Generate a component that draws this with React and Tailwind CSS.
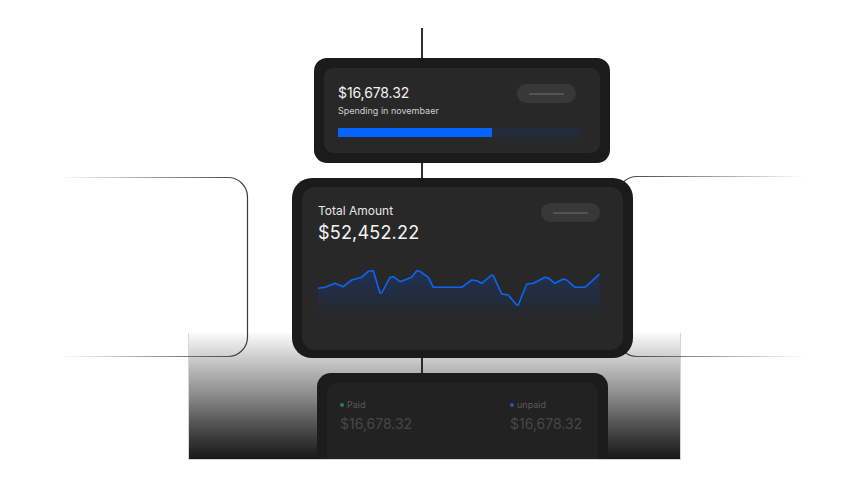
import React from "react";

const pts = [
  [0.3, 24.3], [7, 23.3], [17, 19.3], [25.3, 22.7], [33.7, 16], [43.7, 13.3], [50.3, 7.3], [55.3, 6.7],
  [62, 29], [63.7, 29], [72, 13.3], [75.3, 12.7], [82, 17.7], [93.7, 13.3], [98.7, 6.7], [102, 7.3],
  [110.3, 13.3], [115.3, 23.3], [143.7, 23.3], [153.7, 16], [158.7, 16.7], [163.7, 19.3], [173.7, 11],
  [175.3, 11.7], [183.7, 30], [190.3, 31], [198.7, 41], [200.3, 41], [208.7, 20], [215.3, 19.3],
  [227, 13.3], [230.3, 14], [237, 19.3], [245.3, 15], [248.7, 16], [257, 23.3], [267, 23.3], [281, 10.7],
];

function Chart() {
  const line = pts.map((p) => p.join(",")).join(" ");
  const area = `0,24.3 ${line} 282,60 0,60`;
  return (
    <svg width="282" height="60" viewBox="0 0 282 60" className="block">
      <defs>
        <linearGradient id="areaG" x1="0" y1="0" x2="0" y2="1">
          <stop offset="0" stopColor="#1b3566" stopOpacity="0.75" />
          <stop offset="0.6" stopColor="#1f2d48" stopOpacity="0.55" />
          <stop offset="1" stopColor="#282828" stopOpacity="0" />
        </linearGradient>
      </defs>
      <polygon points={area} fill="url(#areaG)" />
      <polyline points={line} fill="none" stroke="#0b67f2" strokeWidth="1.6" strokeLinejoin="round" strokeLinecap="round" />
    </svg>
  );
}

function Pill() {
  return (
    <div className="w-[59px] h-[19px] rounded-full bg-[#383838] flex items-center justify-center">
      <div className="w-[35px] h-[2px] rounded-full bg-[#545454]" />
    </div>
  );
}

function Connectors() {
  return (
    <svg width="864" height="486" viewBox="0 0 864 486" className="absolute inset-0">
      <defs>
        <linearGradient id="lg" x1="60" y1="0" x2="248" y2="0" gradientUnits="userSpaceOnUse">
          <stop offset="0" stopColor="#555" stopOpacity="0" />
          <stop offset="0.7" stopColor="#555" stopOpacity="0.8" />
          <stop offset="1" stopColor="#3a3a3a" stopOpacity="1" />
        </linearGradient>
        <linearGradient id="rg" x1="805" y1="0" x2="617" y2="0" gradientUnits="userSpaceOnUse">
          <stop offset="0" stopColor="#555" stopOpacity="0" />
          <stop offset="0.7" stopColor="#555" stopOpacity="0.8" />
          <stop offset="1" stopColor="#3a3a3a" stopOpacity="1" />
        </linearGradient>
      </defs>
      <path d="M60 177.5 H228 A19.5 19.5 0 0 1 247.5 197 V337 A19.5 19.5 0 0 1 228 356.5 H60" fill="none" stroke="url(#lg)" strokeWidth="1.2" />
      <path d="M805 176.5 H637 A19.5 19.5 0 0 0 617.5 196 V337 A19.5 19.5 0 0 0 637 356.5 H805" fill="none" stroke="url(#rg)" strokeWidth="1.2" />
    </svg>
  );
}

export default function App() {
  return (
    <div className="relative w-[864px] h-[486px] overflow-hidden bg-white font-['Inter',sans-serif]">
      <div className="absolute left-[188px] top-[333px] w-[493px] h-[127px] bg-gradient-to-b from-[#fbfbfb] via-[#8a8a8a] to-[#181818] border-x border-b border-[#d6d6d6]" />
      <Connectors />

      <div className="relative flex flex-col items-start pl-[292px] pt-[28px]">
        <div className="ml-[129px] w-[2px] h-[30px] bg-[#303030]" />

        {/* top card */}
        <div className="ml-[22px] w-[296px] h-[105px] rounded-[13px] bg-[#1b1b1b] p-[10px]">
          <div className="h-full rounded-[9px] bg-[#282828] pl-[14px] pr-[20px] pt-[15px]">
            <div className="flex justify-between items-start">
              <div>
                <div className="text-[14px] leading-[20px] text-[#f2f2f2] tracking-[-0.1px]">$16,678.32</div>
                <div className="mt-[2px] text-[9px] leading-[12px] text-[#cfcfcf]">Spending in novembaer</div>
              </div>
              <div className="mt-[1px] mr-[4px]">
                <Pill />
              </div>
            </div>
            <div className="mt-[11px] h-[9px] bg-[#222c3b] flex">
              <div className="w-[154px] h-full bg-[#0565fb]" />
            </div>
          </div>
        </div>

        <div className="ml-[129px] w-[2px] h-[15px] bg-[#303030]" />

        {/* main card */}
        <div className="w-[341px] h-[180px] rounded-[20px] bg-[#1b1b1b] pt-[9px] pb-[8px] px-[10px]">
          <div className="h-full rounded-[13px] bg-[#282828] pl-[16px] pr-[23px] pt-[16px]">
            <div className="flex justify-between items-start">
              <div>
                <div className="text-[12px] leading-[16px] text-[#e6e6e6]">Total Amount</div>
                <div className="mt-[1px] text-[18px] leading-[25px] text-[#f4f4f4] tracking-[0.2px]">$52,452.22</div>
              </div>
              <Pill />
            </div>
            <div className="mt-[19px]">
              <Chart />
            </div>
          </div>
        </div>

        <div className="ml-[129px] w-[2px] h-[15px] bg-[#2a2a2a]" />

        {/* bottom card */}
        <div className="ml-[25px] w-[291px] h-[86px] overflow-hidden rounded-t-[14px] bg-[#1c1c1c] pt-[10px] px-[10px]">
          <div className="h-[100px] rounded-t-[10px] bg-[#222222] pl-[13px] pt-[16px] flex">
            <div className="w-[170px]">
              <div className="flex items-center gap-[3px] text-[9px] leading-[12px] text-[#5a5a5a]">
                <span className="w-[4px] h-[4px] rounded-full bg-[#1f8a47]" />
                <span>Paid</span>
              </div>
              <div className="mt-[3px] text-[14px] leading-[20px] text-[#474747]">$16,678.32</div>
            </div>
            <div>
              <div className="flex items-center gap-[3px] text-[9px] leading-[12px] text-[#5a5a5a]">
                <span className="w-[4px] h-[4px] rounded-full bg-[#1f57b8]" />
                <span>unpaid</span>
              </div>
              <div className="mt-[3px] text-[14px] leading-[20px] text-[#474747]">$16,678.32</div>
            </div>
          </div>
        </div>
      </div>
    </div>
  );
}
